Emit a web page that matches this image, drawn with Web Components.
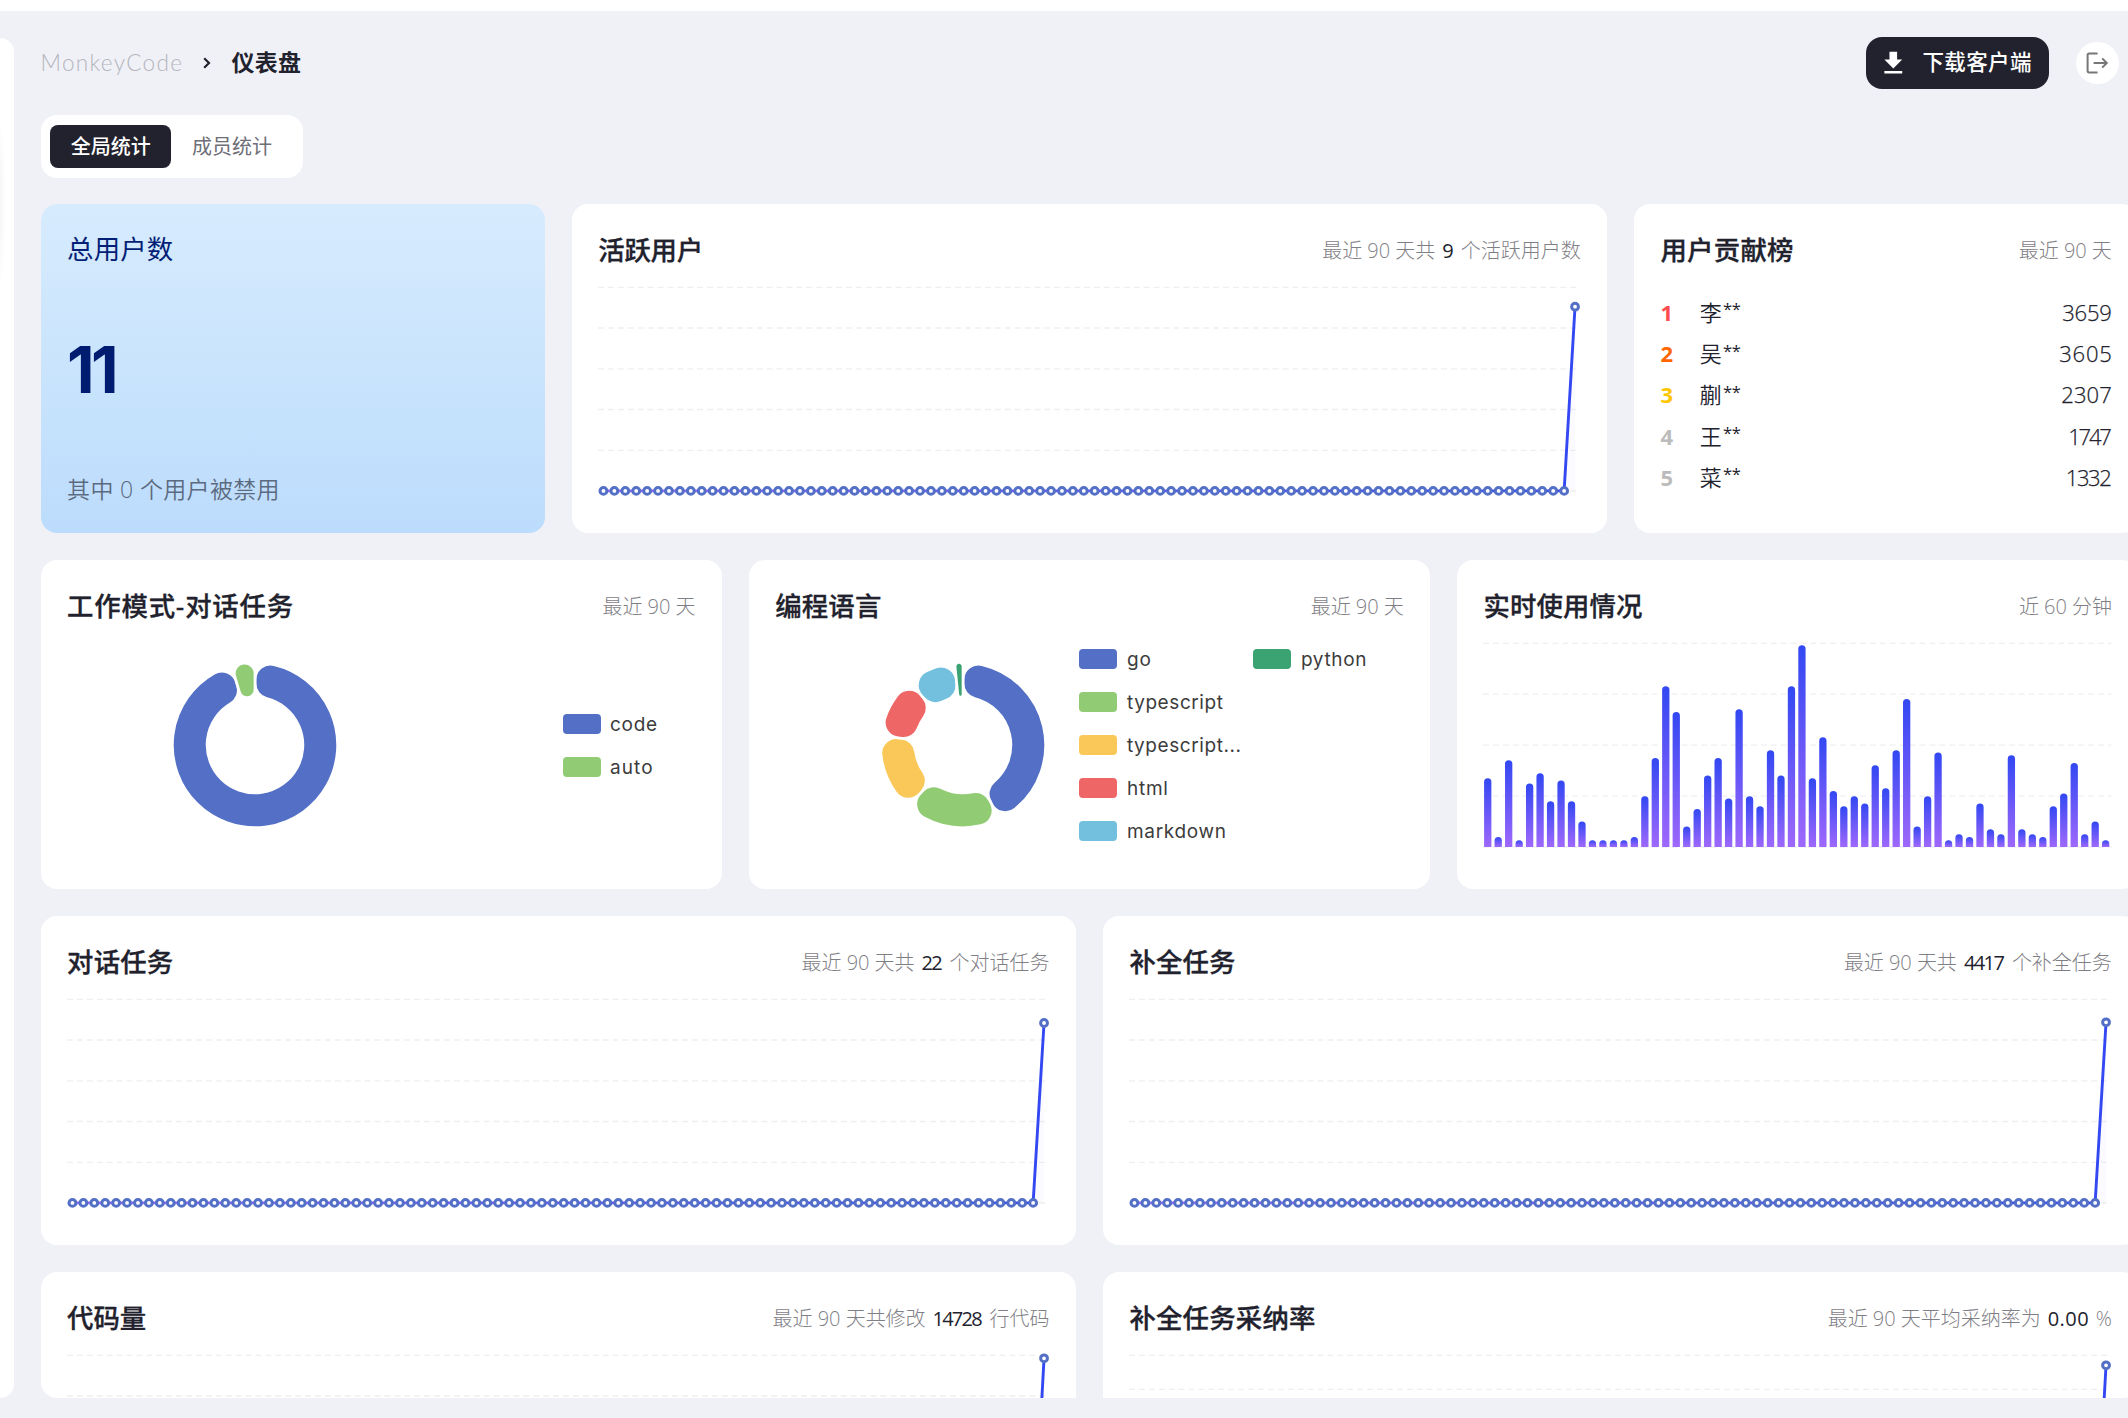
<!DOCTYPE html>
<html lang="zh-CN">
<head>
<meta charset="utf-8">
<title>MonkeyCode</title>
<style>
html, body { margin: 0; height: 100%; overflow: hidden; background: #fff; }
body { font-family: "Open Sans", "Noto Sans CJK SC", sans-serif; color: #21222d; }
</style>
</head>
<body>
<app-shell></app-shell>

<script>
const define = (name, html, setup) => customElements.define(name, class extends HTMLElement {
  connectedCallback() {
    if (this.shadowRoot) return;
    const root = this.attachShadow({ mode: 'open' });
    root.innerHTML = html;
    if (setup) setup(this, root);
  }
});

/* Page content is assembled from data so that each card keeps its figures in one place. */
const note = (pre, preW, num, numW, post, postW) =>
  `<span slot="note"><fit-text w="${preW}">${pre}</fit-text>` +
  (num ? `<fit-text style="color:#21222d;font-weight:400;padding:0 7px" w="${numW + 14}">${num}</fit-text><fit-text w="${postW}">${post}</fit-text>` : '') + `</span>`;
const title = (t, w) => `<fit-text slot="title" w="${w}">${t}</fit-text>`;
const recent = note('最近 90 天', 93);

document.querySelector('app-shell').innerHTML = `
  <crumb-bar slot="head"></crumb-bar>
  <tab-group slot="head"></tab-group>
  <card-row cols="504.5px 1035.7px 504.5px">
    <stat-card tone="blue">${title('总用户数', 106)}<total-users></total-users></stat-card>
    <stat-card>${title('活跃用户', 105)}${note('最近 90 天共', 113, '9', 11, '个活跃用户数', 120)}<line-chart peak="102.7"></line-chart></stat-card>
    <stat-card>${title('用户贡献榜', 133)}${recent}<rank-list></rank-list></stat-card>
  </card-row>
  <card-row cols="681.6px 681.6px 681.6px">
    <stat-card>${title('工作模式-对话任务', 226)}${recent}<ring-panel kind="mode"></ring-panel></stat-card>
    <stat-card>${title('编程语言', 106)}${recent}<ring-panel kind="lang"></ring-panel></stat-card>
    <stat-card>${title('实时使用情况', 159)}${note('近 60 分钟', 93)}<bar-chart></bar-chart></stat-card>
  </card-row>
  <card-row cols="1035.7px 1035.7px">
    <stat-card>${title('对话任务', 106)}${note('最近 90 天共', 113, '22', 21, '个对话任务', 100)}<line-chart peak="107"></line-chart></stat-card>
    <stat-card>${title('补全任务', 106)}${note('最近 90 天共', 113, '4417', 41, '个补全任务', 100)}<line-chart peak="106.3"></line-chart></stat-card>
  </card-row>
  <card-row cols="1035.7px 1035.7px">
    <stat-card>${title('代码量', 79)}${note('最近 90 天共修改', 153, '14728', 50, '行代码', 60)}<line-chart peak="86.3"></line-chart></stat-card>
    <stat-card>${title('补全任务采纳率', 186)}${note('最近 90 天平均采纳率为', 213, '0.00', 41, '%', 13)}<line-chart peak="93.3" splits="6"></line-chart></stat-card>
  </card-row>`;

define('app-shell', `
<style>
:host { display: flex; flex-direction: column; width: 2128px; height: 1418px; overflow: hidden; }
.strip { height: 11px; background: #fff; }
.page { flex: 1; display: flex; gap: 26.5px; background: #f0f1f7; padding: 26.5px 0 20px; box-sizing: border-box; min-height: 0; }
.rail { width: 14px; flex: none; border-radius: 0 14px 14px 0; background: radial-gradient(ellipse 12px 100px at -6px 165px, #ececec, #fff) #fff; }
.main { width: 2098px; flex: none; display: flex; flex-direction: column; min-height: 0; }
.scroll { flex: 1; min-height: 0; overflow: hidden; border-radius: 16px; display: flex; flex-direction: column; gap: 26.4px; margin-top: 26.2px; }
</style>
<div class="strip"></div>
<div class="page">
  <div class="rail"></div>
  <div class="main"><slot name="head"></slot><div class="scroll"><slot></slot></div></div>
</div>`);

define('crumb-bar', `
<style>
:host { display: flex; align-items: center; height: 51px; padding-right: 20px; margin-bottom: 26.5px; flex: none; line-height: 30px; }
.brand { font: 300 22.6px/30px Lato, sans-serif; color: #b4b5bc; }
.chev { margin: 0 20.5px 0 21px; }
.here { font-size: 23px; font-weight: 600; padding-bottom: 2.5px; }
.btn { margin-left: auto; height: 51.3px; width: 183.3px; box-sizing: border-box; padding-left: 12.5px; border-radius: 16px; background: #21222d; color: #fff; display: flex; align-items: center; gap: 13.4px; font-size: 21.5px; font-weight: 500; }
.btn fit-text { padding-bottom: 2px; }
.out { margin-left: 26.5px; width: 42.8px; height: 42.8px; border-radius: 50%; background: #fff; display: flex; align-items: center; justify-content: center; }
svg { display: block; }
</style>
<fit-text class="brand" w="141.5">MonkeyCode</fit-text>
<svg class="chev" width="8" height="12" viewBox="0 0 8 12" fill="none" stroke="#21222d" stroke-width="2.2"><path d="M1.2 1.2 6 6 1.2 10.8"/></svg>
<fit-text class="here" w="69.5">仪表盘</fit-text>
<div class="btn"><svg width="30.6" height="30.6" viewBox="0 0 24 24" fill="#fff"><path d="M5 20h14v-2H5zM19 9h-4V3H9v6H5l7 7z"/></svg><fit-text w="109">下载客户端</fit-text></div>
<div class="out"><svg width="24" height="24" viewBox="0 0 24 24" fill="none" stroke="#777" stroke-width="2"><path d="M12.6 2.6H4.200Q2.6 2.6 2.6 4.200v15.600q0 1.600 1.600 1.600h8.400M8.600 12h13M17.200 7.400 21.800 12l-4.600 4.600"/></svg></div>`);

define('tab-group', `
<style>
:host { display: flex; align-self: flex-start; width: 262.5px; height: 62.7px; box-sizing: border-box; padding: 9.5px; background: #fff; border-radius: 16px; flex: none; font-size: 20px; color: #6d6e76; }
div { width: 121.4px; display: flex; align-items: center; justify-content: center; border-radius: 8px; }
.on { background: #21222d; color: #fff; font-weight: 500; }
fit-text { padding-bottom: 2.5px; }
</style>
<div class="on"><fit-text w="80">全局统计</fit-text></div><div><fit-text w="80">成员统计</fit-text></div>`);

define('card-row', `
<style>:host { display: block; flex: none; } .g { display: grid; gap: 26.6px; grid-auto-rows: 329.6px; }</style>
<div class="g"><slot></slot></div>`, (el, root) => {
  root.querySelector('.g').style.gridTemplateColumns = el.getAttribute('cols');
});

define('stat-card', `
<style>
:host { display: flex; flex-direction: column; box-sizing: border-box; padding: 26px 26.6px 25px; border-radius: 16px; background: #fff; min-width: 0; }
:host([tone="blue"]) { background: linear-gradient(#d7ebfe, #c9e4fc 50%, #bcdcfd); }
.head { display: flex; justify-content: space-between; align-items: center; height: 40px; flex: none; }
.t { font-size: 26.4px; line-height: 40px; font-weight: 500; -webkit-text-stroke: .3px currentColor; }
:host([tone="blue"]) .t { font-weight: 400; color: #041f76; -webkit-text-stroke: 0; padding-bottom: 1px; }
.n { font-size: 20px; line-height: 40px; font-weight: 300; color: #7f8086; white-space: nowrap; padding-top: 1.5px; }
</style>
<div class="head"><div class="t"><slot name="title"></slot></div><div class="n"><slot name="note"></slot></div></div>
<slot></slot>`);

define('total-users', `
<style>
:host { display: flex; flex-direction: column; flex: 1; }
.big { font: 700 64px/88px Inter, sans-serif; color: #001c70; margin-top: 56.5px; }
.sub { font-size: 23px; line-height: 32px; color: #5c6a80; margin-top: 58.5px; font-weight: 350; }
</style>
<div class="big"><fit-text w="51.5">11</fit-text></div>
<div class="sub"><fit-text w="212.5">其中 0 个用户被禁用</fit-text></div>`);

define('rank-list', `
<style>
:host { display: flex; flex-direction: column; padding-top: 21.5px; }
.r { display: flex; height: 41.2px; align-items: center; font-size: 22px; line-height: 30px; font-weight: 350; }
.k { width: 39.4px; font-weight: 700; }
.v { margin-left: auto; -webkit-text-stroke: .25px currentColor; }
.s { margin-left: 1px; font-size: 16.5px; font-weight: 400; padding-bottom: 5px; }
</style>`, (el, root) => {
  const rows = [['#ff4d4f', '李', 3659, 49.5], ['#ff6600', '吴', 3605, 52.5], ['#ffc600', '蒯', 2307, 50.5], ['#bcbcbc', '王', 1747, 43.5], ['#bcbcbc', '菜', 1332, 46]];
  root.innerHTML += rows.map(([c, n, v, w], i) =>
    `<div class="r"><span class="k" style="color:${c}">${i + 1}</span><span>${n}</span><fit-text class="s" w="18">**</fit-text><fit-text class="v" w="${w}">${v}</fit-text></div>`).join('');
});

const gridLines = (w, n) => Array.from({ length: n + 1 }, (_, i) => {
  const y = (83.3 + i * 203.7 / n).toFixed(1);
  return `<path d="M0 ${y}H${w}" stroke="#efeff1" stroke-width="1.33" stroke-dasharray="6 3.920"/>`;
}).join('');

define('line-chart', `<style>:host, svg { display: block; }</style>`, (el, root) => {
  const W = 982.5, step = W / 90, base = 286.9, peak = +el.getAttribute('peak');
  const xs = Array.from({ length: 90 }, (_, i) => step * (i + .5));
  const pts = xs.map((x, i) => [x.toFixed(2), i === 89 ? peak : base]);
  root.innerHTML += `<svg width="982.5" height="238" viewBox="0 66 982.5 238">
  <defs><linearGradient id="g" gradientUnits="userSpaceOnUse" x1="0" y1="0" x2="983" y2="0"><stop offset="0" stop-color="#9e68fc"/><stop offset="1" stop-color="#3248f2"/></linearGradient></defs>
  ${gridLines(W, +el.getAttribute('splits') || 5)}
  <path d="M${xs[88]} ${base}L${xs[89]} ${peak}V${base}z" fill="#3248f2" opacity=".02"/>
  <polyline points="${pts.map(p => p.join()).join(' ')}" fill="none" stroke="url(#g)" stroke-width="2.9" stroke-linejoin="bevel"/>
  ${pts.map(p => `<circle cx="${p[0]}" cy="${p[1]}" r="3.400" fill="#fff" stroke="#5470c6" stroke-width="3"/>`).join('')}</svg>`;
});

define('bar-chart', `<style>:host, svg { display: block; }</style>`, (el, root) => {
  const h = [206,30,260,20,190,221,137,199,137,76,20,20,20,20,30,152,267,482,405,61,114,214,267,145,413,152,122,290,214,482,605,206,329,168,122,152,130,245,176,290,444,61,152,283,20,38,30,130,53,38,275,53,38,30,122,160,252,38,76,20];
  const W = 628.4, step = W / 60, base = 286.9, w = 7.3, r = w / 2;
  root.innerHTML += `<svg width="628.4" height="238" viewBox="0 66 628.4 238">
  <defs><linearGradient id="b" x1="0" y1="0" x2="0" y2="1"><stop offset="0" stop-color="#3248f2"/><stop offset="1" stop-color="#9e68fc"/></linearGradient></defs>
  ${gridLines(W, 4)}
  ${h.map((v, i) => { const x = step * (i + .5) - r - .5, y = base - v / 3;
    return `<path fill="url(#b)" d="M${x.toFixed(2)} ${base}V${(y + r).toFixed(2)}a${r} ${r} 0 0 1 ${w} 0V${base}z"/>`; }).join('')}</svg>`;
});

/* Annular sector with rounded corners; angles in degrees, clockwise from the top. */
function sector(a0, a1, R, r, cr) {
  const rad = Math.PI / 180, s = Math.sin(Math.min(90, (a1 - a0) / 2) * rad);
  const co = Math.min(cr, R * s / (1 + s)), ci = s < 1 ? Math.min(cr, r * s / (1 - s)) : cr;
  const to = Math.asin(co / (R - co)) / rad, ti = Math.asin(ci / (r + ci)) / rad;
  const p = (d, a) => (d * Math.sin(a * rad)).toFixed(2) + ' ' + (-d * Math.cos(a * rad)).toFixed(2);
  const lo = Math.sqrt((R - co) ** 2 - co ** 2), li = Math.sqrt((r + ci) ** 2 - ci ** 2);
  const bigO = a1 - a0 - 2 * to > 180 ? 1 : 0, bigI = a1 - a0 - 2 * ti > 180 ? 1 : 0;
  return `M${p(lo, a0)}A${co} ${co} 0 0 1 ${p(R, a0 + to)}A${R} ${R} 0 ${bigO} 1 ${p(R, a1 - to)}A${co} ${co} 0 0 1 ${p(lo, a1)}` +
    `L${p(li, a1)}A${ci} ${ci} 0 0 1 ${p(r, a1 - ti)}A${r} ${r} 0 ${bigI} 0 ${p(r, a0 + ti)}A${ci} ${ci} 0 0 1 ${p(li, a0)}z`;
}

define('ring-panel', `
<style>
:host { display: flex; align-items: center; flex: 1; padding-left: 103.2px; }
svg { display: block; flex: none; }
.lg { display: grid; grid-auto-flow: column; grid-auto-columns: 174px; row-gap: 22.9px; }
.i { display: flex; align-items: center; gap: 9.500px; height: 20px; font: 400 19px/20px Inter, sans-serif; color: #3c3c3c; }
.i i { width: 38px; height: 20px; border-radius: 4px; }
.i fit-text { padding-top: 2px; }
</style>`, (el, root) => {
  const data = el.getAttribute('kind') === 'mode'
    ? { rows: 2, gap: 222.3, items: [['code', '#5470c6', 343.6, 47], ['auto', '#91cc75', 360, 42.500]] }
    : { rows: 5, gap: 31, items: [['go', '#5470c6', 154.2, 24], ['typescript', '#91cc75', 221.5, 96], ['typescript...', '#fac858', 276.3, 114], ['html', '#ee6666', 320, 41], ['markdown', '#73c0de', 354.2, 99], ['python', '#3ba272', 360, 65.500]] };
  let a = 0;
  root.innerHTML += `<svg width="170" height="170" viewBox="-85 -85 170 170">${data.items.map(([, c, end]) => {
    const d = sector(a, end, 82.6, 47.9, 15.5); a = end;
    return `<path d="${d}" fill="${c}" stroke="#fff" stroke-width="2.67"/>`; }).join('')}</svg>
  <div class="lg" style="grid-template-rows:repeat(${data.rows},20px);margin-left:${data.gap}px">${data.items.map(([t, c, , w]) =>
    `<div class="i"><i style="background:${c}"></i><fit-text w="${w}">${t}</fit-text></div>`).join('')}</div>`;
});

/* Spreads its text over the width given in "w" by adjusting letter spacing. */
define('fit-text', `<style>:host { display: inline-block; white-space: pre; }</style><slot></slot>`, (el) => {
  const n = el.textContent.length - 1;
  if (n < 1) return;
  const ls = (+el.getAttribute('w') - el.getBoundingClientRect().width) / n;
  el.style.letterSpacing = ls.toFixed(3) + 'px';
  el.style.marginRight = (-ls).toFixed(3) + 'px';
});
</script>
</body>
</html>
